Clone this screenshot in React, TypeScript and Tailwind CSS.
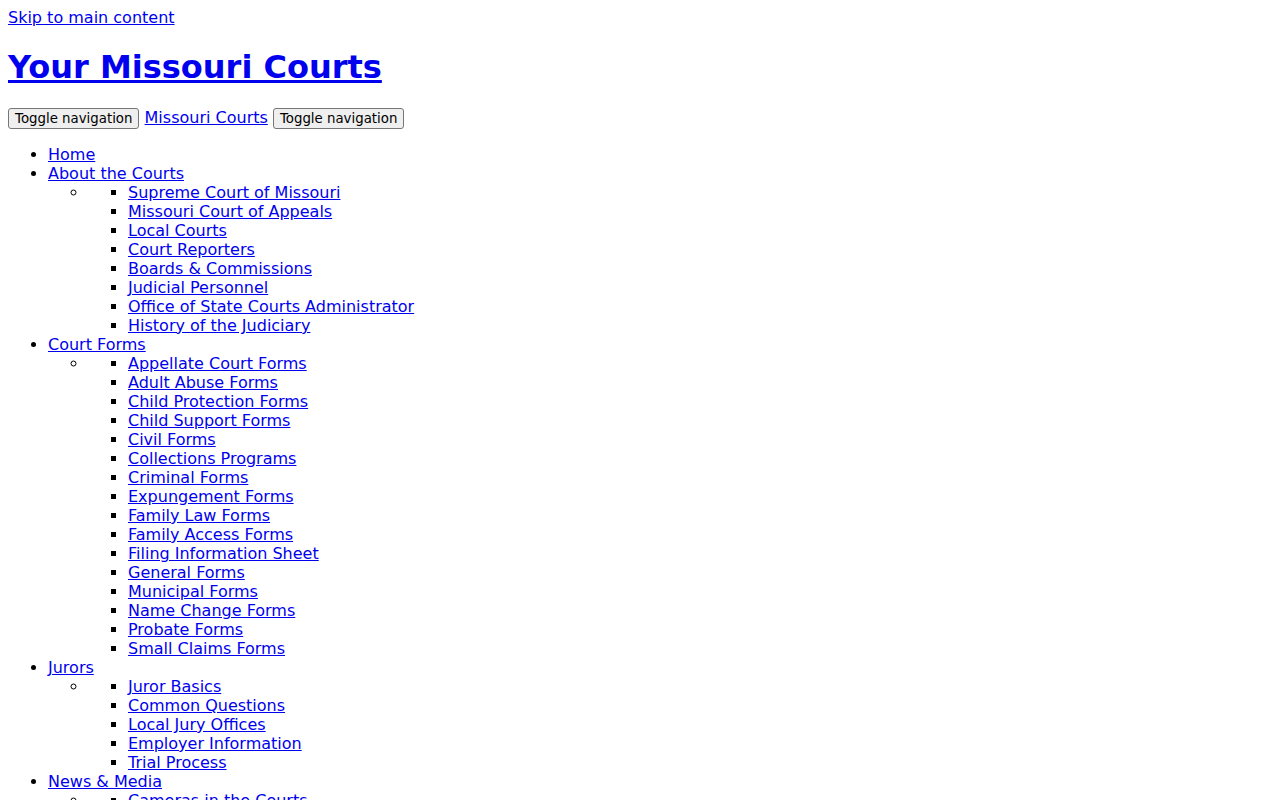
import React from 'react';

type Group = { title: string; children?: string[] };

const nav: Group[] = [
  { title: 'Home' },
  {
    title: 'About the Courts',
    children: [
      'Supreme Court of Missouri',
      'Missouri Court of Appeals',
      'Local Courts',
      'Court Reporters',
      'Boards & Commissions',
      'Judicial Personnel',
      'Office of State Courts Administrator',
      'History of the Judiciary',
    ],
  },
  {
    title: 'Court Forms',
    children: [
      'Appellate Court Forms',
      'Adult Abuse Forms',
      'Child Protection Forms',
      'Child Support Forms',
      'Civil Forms',
      'Collections Programs',
      'Criminal Forms',
      'Expungement Forms',
      'Family Law Forms',
      'Family Access Forms',
      'Filing Information Sheet',
      'General Forms',
      'Municipal Forms',
      'Name Change Forms',
      'Probate Forms',
      'Small Claims Forms',
    ],
  },
  {
    title: 'Jurors',
    children: ['Juror Basics', 'Common Questions', 'Local Jury Offices', 'Employer Information', 'Trial Process'],
  },
  {
    title: 'News & Media',
    children: ['Cameras in the Courts', 'Press Releases', 'Media Contacts'],
  },
];

const link = 'text-[#0000ee] underline';
const btn =
  'border border-[#767676] rounded-[3px] bg-[#efefef] px-[6px] py-[2px] text-[13.33px] leading-[normal] text-black align-baseline';

export default function App() {
  return (
    <div className="p-2 font-['DejaVu_Sans',sans-serif] text-[16px] leading-[normal] text-black bg-white min-h-screen">
      <a href="#main" className={link}>Skip to main content</a>
      <h1 className="my-[21.44px] text-[32px] font-bold leading-[normal]">
        <a href="#" className={link}>Your Missouri Courts</a>
      </h1>
      <div>
        <button className={btn}>Toggle navigation</button>{' '}
        <a href="#" className={link}>Missouri Courts</a>{' '}
        <button className={btn}>Toggle navigation</button>
      </div>
      <ul className="my-4 pl-10 list-disc">
        {nav.map((g) => (
          <li key={g.title}>
            <a href="#" className={link}>{g.title}</a>
            {g.children && (
              <ul className="pl-10 list-[circle]">
                <li>
                  <ul className="pl-10 list-[square]">
                    {g.children.map((c) => (
                      <li key={c}>
                        <a href="#" className={link}>{c}</a>
                      </li>
                    ))}
                  </ul>
                </li>
              </ul>
            )}
          </li>
        ))}
      </ul>
    </div>
  );
}
